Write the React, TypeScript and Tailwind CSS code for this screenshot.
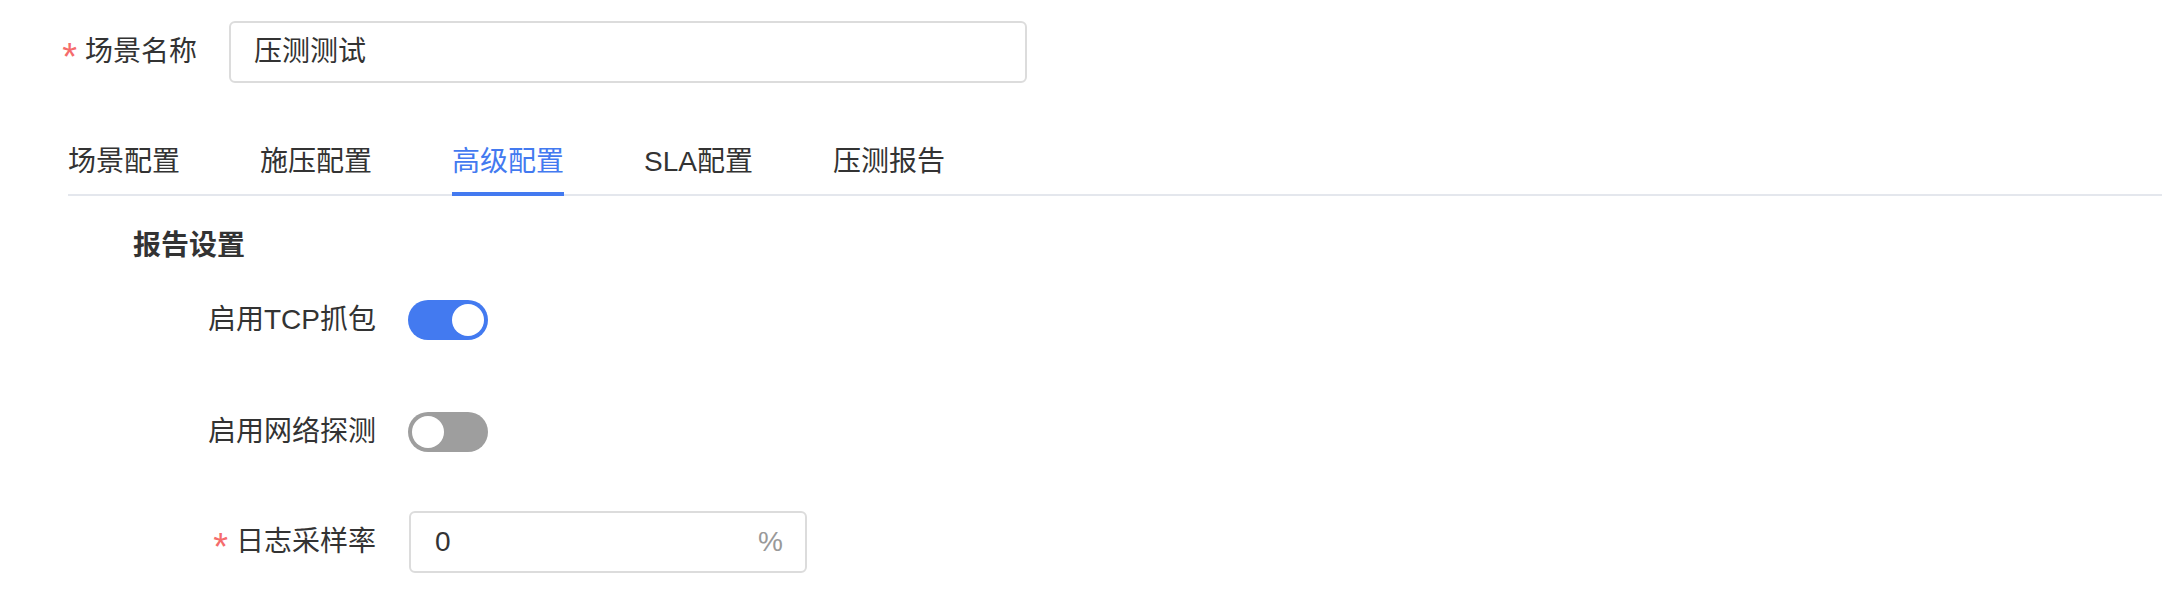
import React from "react";

const FONT = { fontFamily: '"Liberation Sans", "Noto Sans CJK SC", sans-serif' };

function Toggle({ on }: { on: boolean }) {
  return (
    <div
      className={
        "w-[80px] h-[40px] rounded-full flex items-center px-[4px] " +
        (on ? "bg-[#437af0] justify-end" : "bg-[#9e9e9e] justify-start")
      }
    >
      <div className="w-[32px] h-[32px] rounded-full bg-white" />
    </div>
  );
}

function Star() {
  return (
    <span className="text-[#f56c6c] text-[38px] leading-none mr-[8px] translate-y-[5px]">*</span>
  );
}

export default function App() {
  const tabs = ["场景配置", "施压配置", "高级配置", "SLA配置", "压测报告"];
  return (
    <div className="w-[2162px] h-[614px] bg-white overflow-hidden text-[#333333]" style={FONT}>
      {/* scene name row */}
      <div className="flex items-center pt-[21px]">
        <div className="w-[229px] pr-[32px] flex justify-end items-center text-[28px] leading-[40px]">
          <Star />
          <span>场景名称</span>
        </div>
        <div className="w-[798px] h-[62px] border-2 border-[#dcdcdc] rounded-[6px] pl-[23px] flex items-center text-[28px]">
          压测测试
        </div>
      </div>

      {/* tabs */}
      <div className="ml-[68px] mt-[47px] flex gap-[80px] border-b-2 border-[#e4e7ed]">
        {tabs.map((t, i) => (
          <div
            key={t}
            className={
              "relative h-[64px] flex items-center text-[28px] " +
              (i === 2 ? "text-[#437af0]" : "text-[#333333]")
            }
          >
            {t}
            {i === 2 && (
              <div className="absolute left-0 right-0 bottom-[-2px] h-[4px] bg-[#437af0]" />
            )}
          </div>
        ))}
      </div>

      {/* section header */}
      <div className="ml-[133px] mt-[30px] h-[40px] flex items-center text-[28px] font-bold">
        报告设置
      </div>

      {/* TCP capture */}
      <div className="flex items-center mt-[34px] h-[40px]">
        <div className="w-[376px] flex justify-end text-[28px]">启用TCP抓包</div>
        <div className="ml-[32px]">
          <Toggle on={true} />
        </div>
      </div>

      {/* network probe */}
      <div className="flex items-center mt-[72px] h-[40px]">
        <div className="w-[376px] flex justify-end text-[28px]">启用网络探测</div>
        <div className="ml-[32px]">
          <Toggle on={false} />
        </div>
      </div>

      {/* log sample rate */}
      <div className="flex items-center mt-[59px]">
        <div className="w-[376px] flex justify-end items-center text-[28px] leading-[40px]">
          <Star />
          <span>日志采样率</span>
        </div>
        <div className="ml-[33px] w-[398px] h-[62px] border-2 border-[#dcdcdc] rounded-[6px] pl-[24px] pr-[22px] flex items-center justify-between text-[28px]">
          <span>0</span>
          <span className="text-[#999999]">%</span>
        </div>
      </div>
    </div>
  );
}
